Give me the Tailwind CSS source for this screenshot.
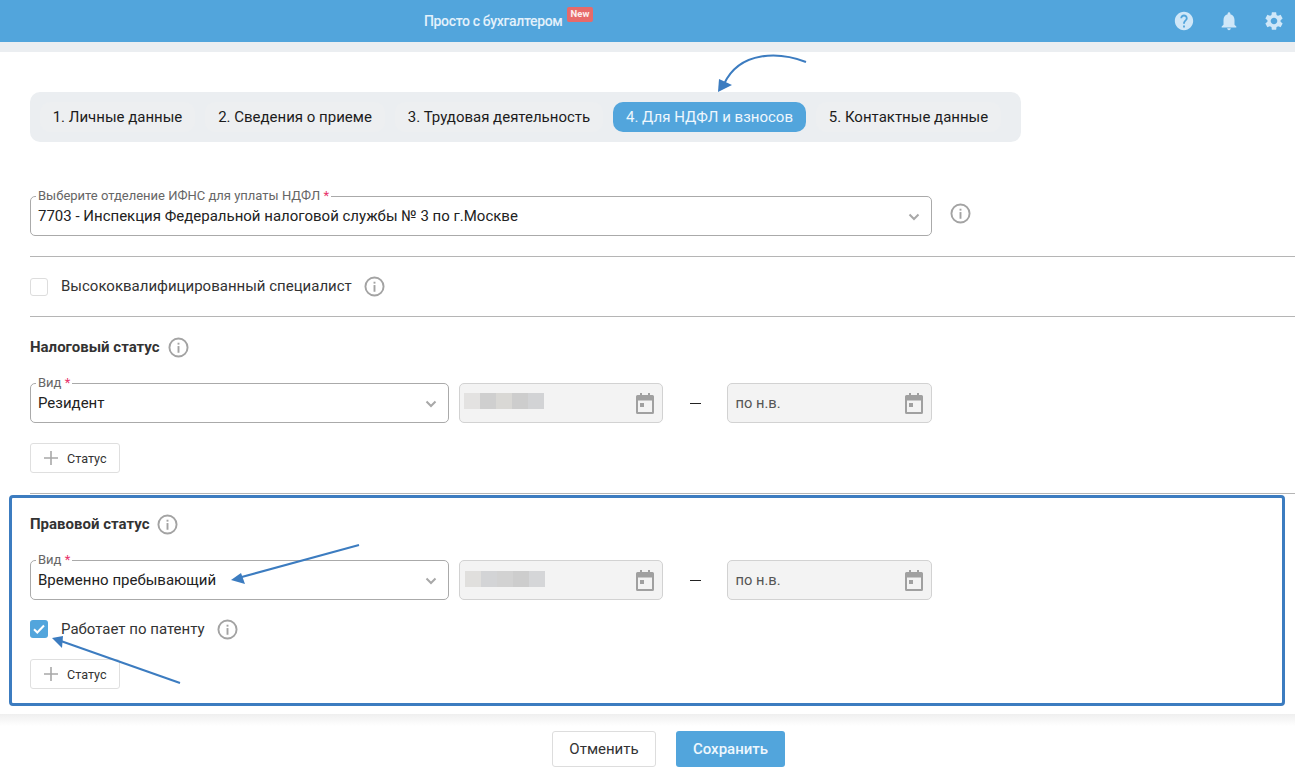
<!DOCTYPE html>
<html lang="ru">
<head>
    <meta charset="UTF-8">
    <title>Для НДФЛ и взносов</title>
    <script src="https://cdn.jsdelivr.net/npm/@tailwindcss/browser@4"></script>
</head>
<body class="bg-white font-['Roboto',sans-serif] text-[#222] overflow-hidden">

<!-- общие иконки -->
<svg class="hidden">
    <symbol id="info" viewBox="0 0 22 22">
        <circle cx="11" cy="11" r="9.5" fill="none" stroke="#a3a3a3" stroke-width="2"/>
        <rect x="10" y="9.5" width="2" height="7" fill="#a3a3a3"/>
        <rect x="10" y="6" width="2" height="2" fill="#a3a3a3"/>
    </symbol>
    <symbol id="chevron" viewBox="0 0 12 8">
        <path d="M1.5 1.5 6 6l4.500-4.500" fill="none" stroke="#a8a8a8" stroke-width="2"/>
    </symbol>
    <symbol id="calendar" viewBox="0 0 18 21">
        <path d="M4 0h2v2h6V0h2v2h2.500A1.500 1.500 0 0 1 18 3.500v16a1.500 1.500 0 0 1-1.500 1.500h-15A1.500 1.500 0 0 1 0 19.500v-16A1.500 1.500 0 0 1 1.500 2H4zM2 7.500V19h14V7.500z" fill="#a0a0a0"/>
        <rect x="4" y="10" width="4" height="4" fill="#a0a0a0"/>
    </symbol>
    <symbol id="plus" viewBox="0 0 14 14">
        <path d="M7 0v14M0 7h14" stroke="#a8a8a8" stroke-width="1.600"/>
    </symbol>
</svg>

<div class="relative h-[775px] flex flex-col">
    <!-- шапка -->
    <header class="h-[42px] shrink-0 bg-[#52a5dc] flex items-center pl-[424px] pr-[10px]">
        <div class="relative text-[14px] font-medium text-[#e3f1fb] tracking-[-0.35px]">Просто с бухгалтером
            <span class="absolute left-[143px] -top-[4px] w-[26px] h-[15px] rounded-[2px] bg-[#e76a6a] text-[9.500px] tracking-normal font-bold text-[#fdeeee] flex items-center justify-center">New</span>
        </div>
        <div class="ml-auto flex items-center gap-[23px]">
            <svg class="w-[22px] h-[22px]" viewBox="0 0 24 24" fill="#cfe7f8"><path d="M12 2C6.480 2 2 6.480 2 12s4.480 10 10 10 10-4.480 10-10S17.520 2 12 2zm1 17h-2v-2h2v2zm2.070-7.750l-.9.920C13.450 12.900 13 13.500 13 15h-2v-.5c0-1.100.45-2.100 1.170-2.830l1.240-1.260c.37-.36.59-.86.59-1.410 0-1.100-.9-2-2-2s-2 .9-2 2H8c0-2.210 1.790-4 4-4s4 1.790 4 4c0 .88-.36 1.680-.93 2.250z"/></svg>
            <svg class="w-[22px] h-[22px]" viewBox="0 0 24 24" fill="#cfe7f8"><path d="M12 22c1.100 0 2-.9 2-2h-4c0 1.100.89 2 2 2zm6-6v-5c0-3.070-1.640-5.640-4.500-6.320V4c0-.83-.67-1.500-1.500-1.500s-1.500.67-1.500 1.500v.68C7.630 5.360 6 7.920 6 11v5l-2 2v1h16v-1l-2-2z"/></svg>
            <svg class="w-[22px] h-[22px]" viewBox="0 0 24 24" fill="#cfe7f8"><path d="M19.140 12.940c.04-.3.06-.61.06-.94 0-.32-.02-.64-.07-.94l2.030-1.580c.18-.14.23-.41.12-.61l-1.920-3.320c-.12-.22-.37-.29-.59-.22l-2.390.96c-.5-.38-1.030-.7-1.620-.94l-.36-2.540c-.04-.24-.24-.41-.48-.41h-3.840c-.24 0-.43.17-.47.41l-.36 2.540c-.59.24-1.130.57-1.620.94l-2.390-.96c-.22-.08-.47 0-.59.22L2.740 8.870c-.12.21-.08.47.12.61l2.030 1.580c-.05.3-.09.63-.09.94s.02.64.07.94l-2.030 1.580c-.18.14-.23.41-.12.61l1.920 3.320c.12.22.37.29.59.22l2.390-.96c.5.38 1.030.7 1.620.94l.36 2.540c.05.24.24.41.48.41h3.840c.24 0 .44-.17.47-.41l.36-2.540c.59-.24 1.130-.56 1.620-.94l2.390.96c.22.08.47 0 .59-.22l1.920-3.320c.12-.22.07-.47-.12-.61l-2.010-1.580zM12 15.600c-1.980 0-3.600-1.620-3.600-3.600s1.620-3.600 3.600-3.600 3.600 1.620 3.600 3.600-1.620 3.600-3.600 3.600z"/></svg>
        </div>
    </header>
    <div class="h-[10px] shrink-0 bg-[#ebeef1]"></div>

    <main class="h-[662px] shrink-0 pl-[30px] pt-[40px]">
        <!-- шаги -->
        <nav class="w-[991px] h-[50px] rounded-[10px] bg-[#ebeef1] flex items-center gap-[10px] px-[10px] text-[15px] text-[#1c1c1c]">
            <div class="w-[155px] h-[30px] pt-px rounded-[10px] bg-[#edeff1] flex items-center justify-center">1. Личные данные</div>
            <div class="w-[180px] h-[30px] pt-px rounded-[10px] bg-[#edeff1] flex items-center justify-center">2. Сведения о приеме</div>
            <div class="w-[208px] h-[30px] pt-px rounded-[10px] bg-[#edeff1] flex items-center justify-center">3. Трудовая деятельность</div>
            <div class="w-[193px] h-[30px] pt-px rounded-[10px] bg-[#52a5dc] text-[#eef7fd] flex items-center justify-center">4. Для НДФЛ и взносов</div>
            <div class="w-[185px] h-[30px] pt-px rounded-[10px] bg-[#edeff1] flex items-center justify-center">5. Контактные данные</div>
        </nav>

        <!-- ИФНС -->
        <div class="mt-[54px] flex items-center">
            <div class="relative w-[902px] h-[40px] rounded-[5px] border border-[#aaaaaa] flex items-center pl-[7px] pr-[11px] pt-[1px] text-[15px]">
                <span class="absolute left-[5px] -top-[8px] bg-white px-[2px] text-[13px] leading-[14px] text-[#666]">Выберите отделение ИФНС для уплаты НДФЛ <span class="text-[#e8336b]">*</span></span>
                7703 - Инспекция Федеральной налоговой службы № 3 по г.Москве
                <svg class="ml-auto w-[12px] h-[8px]"><use href="#chevron"/></svg>
            </div>
            <svg class="ml-[18px] -mt-[6px] w-[21px] h-[21px]"><use href="#info"/></svg>
        </div>
        <div class="mt-[20px] h-px bg-[#b5b5b5]"></div>

        <div class="h-[59px] flex items-center">
            <span class="w-[18px] h-[18px] rounded-[3px] border border-[#dddddd] bg-white"></span>
            <span class="ml-[13px] text-[15px] text-[#333]">Высококвалифицированный специалист</span>
            <svg class="ml-[12px] w-[21px] h-[21px]"><use href="#info"/></svg>
        </div>
        <div class="h-px bg-[#b5b5b5]"></div>

        <!-- Налоговый статус -->
        <div class="mt-[20px] h-[20px] flex items-center">
            <span class="text-[15px] font-bold text-[#333]">Налоговый статус</span>
            <svg class="ml-[8px] w-[21px] h-[21px]"><use href="#info"/></svg>
        </div>
        <div class="mt-[26px] flex items-center">
            <div class="relative w-[419px] h-[40px] rounded-[5px] border border-[#aaaaaa] flex items-center pl-[7px] pr-[11px] pt-[1px] text-[15px]">
                <span class="absolute left-[5px] -top-[8px] bg-white px-[2px] text-[13px] leading-[14px] text-[#666]">Вид <span class="text-[#e8336b]">*</span></span>
                Резидент
                <svg class="ml-auto w-[12px] h-[8px]"><use href="#chevron"/></svg>
            </div>
            <div class="ml-[10px] w-[204px] h-[40px] rounded-[5px] border border-[#d2d2d2] bg-[#f3f3f3] flex items-center pl-[4px] pr-[8px]">
                <div class="flex -mt-[4px]">
                    <i class="w-[16px] h-[16px] bg-[#e3e2e1]"></i><i class="w-[16px] h-[16px] bg-[#cfcfcf]"></i><i class="w-[16px] h-[16px] bg-[#d9d8d5]"></i><i class="w-[16px] h-[16px] bg-[#cdcdcd]"></i><i class="w-[16px] h-[16px] bg-[#d2d3d5]"></i>
                </div>
                <svg class="ml-auto w-[18px] h-[21px]"><use href="#calendar"/></svg>
            </div>
            <span class="ml-[27px] w-[11px] h-px bg-[#222]"></span>
            <div class="ml-[26px] w-[205px] h-[40px] rounded-[5px] border border-[#d2d2d2] bg-[#f3f3f3] flex items-center pl-[7.500px] pr-[8px] text-[14.700px] text-[#555]">
                по н.в.
                <svg class="ml-auto w-[18px] h-[21px]"><use href="#calendar"/></svg>
            </div>
        </div>
        <button class="mt-[20px] w-[90px] h-[30px] rounded-[3px] border border-[#dfdfdf] bg-white flex items-center pl-[13px] text-[12.600px] text-[#333]">
            <svg class="w-[14px] h-[14px] mr-[9px]"><use href="#plus"/></svg><span class="translate-y-px">Статус</span>
        </button>
        <div class="mt-[20px] h-px bg-[#b5b5b5]"></div>

        <!-- Правовой статус -->
        <div class="mt-[20px] h-[20px] flex items-center">
            <span class="text-[15px] font-bold text-[#333]">Правовой статус</span>
            <svg class="ml-[8px] w-[21px] h-[21px]"><use href="#info"/></svg>
        </div>
        <div class="mt-[26px] flex items-center">
            <div class="relative w-[419px] h-[40px] rounded-[5px] border border-[#aaaaaa] flex items-center pl-[7px] pr-[11px] pt-[1px] text-[15px]">
                <span class="absolute left-[5px] -top-[8px] bg-white px-[2px] text-[13px] leading-[14px] text-[#666]">Вид <span class="text-[#e8336b]">*</span></span>
                Временно пребывающий
                <svg class="ml-auto w-[12px] h-[8px]"><use href="#chevron"/></svg>
            </div>
            <div class="ml-[10px] w-[204px] h-[40px] rounded-[5px] border border-[#d2d2d2] bg-[#f3f3f3] flex items-center pl-[5px] pr-[8px]">
                <div class="flex -mt-[3px]">
                    <i class="w-[16px] h-[16px] bg-[#e0dfdd]"></i><i class="w-[16px] h-[16px] bg-[#d3d4d6]"></i><i class="w-[16px] h-[16px] bg-[#d2d2d2]"></i><i class="w-[16px] h-[16px] bg-[#cdcdcd]"></i><i class="w-[16px] h-[16px] bg-[#d5d6d8]"></i>
                </div>
                <svg class="ml-auto w-[18px] h-[21px]"><use href="#calendar"/></svg>
            </div>
            <span class="ml-[27px] w-[11px] h-px bg-[#222]"></span>
            <div class="ml-[26px] w-[205px] h-[40px] rounded-[5px] border border-[#d2d2d2] bg-[#f3f3f3] flex items-center pl-[7.500px] pr-[8px] text-[14.700px] text-[#555]">
                по н.в.
                <svg class="ml-auto w-[18px] h-[21px]"><use href="#calendar"/></svg>
            </div>
        </div>
        <div class="mt-[20px] h-[18px] flex items-center">
            <span class="w-[18px] h-[18px] rounded-[3px] bg-[#52a5dc] flex items-center justify-center">
                <svg class="w-[12px] h-[10px]" viewBox="0 0 12 10"><path d="M1 5.200 4.300 8.500 11 1.500" fill="none" stroke="#fff" stroke-width="2"/></svg>
            </span>
            <span class="ml-[13px] text-[15px] text-[#333]">Работает по патенту</span>
            <svg class="ml-[12px] w-[21px] h-[21px]"><use href="#info"/></svg>
        </div>
        <button class="mt-[21px] w-[90px] h-[30px] rounded-[3px] border border-[#dfdfdf] bg-white flex items-center pl-[13px] text-[12.600px] text-[#333]">
            <svg class="w-[14px] h-[14px] mr-[9px]"><use href="#plus"/></svg><span class="translate-y-px">Статус</span>
        </button>
    </main>

    <!-- низ формы -->
    <footer class="flex-1 bg-linear-to-b from-[#efefef] to-white to-[12px] pl-[552px] pt-[17px] flex gap-[20px]">
        <button class="w-[104px] h-[36px] rounded-[3px] border border-[#dddddd] bg-white text-[15px] text-[#333]">Отменить</button>
        <button class="w-[109px] h-[36px] rounded-[3px] bg-[#52a5dc] text-[15px] font-medium text-[#eef7fd]">Сохранить</button>
    </footer>

    <!-- пометки поверх скриншота -->
    <div class="absolute left-[9px] top-[495px] w-[1276px] h-[211px] rounded-[4px] border-[3px] border-[#3c7cc0]"></div>
    <svg class="absolute left-0 top-0 pointer-events-none" width="1295" height="775" fill="#3c7cc0">
        <path d="M806 62C780 52 740 50 724 84" fill="none" stroke="#3c7cc0" stroke-width="2"/>
        <path d="M718 92 719 79 732 85z"/>
        <path d="M359 545 238 578" fill="none" stroke="#3c7cc0" stroke-width="2"/>
        <path d="M231 580 241 573 245 584z"/>
        <path d="M180 683 58 640" fill="none" stroke="#3c7cc0" stroke-width="2"/>
        <path d="M52 638 63 636 62 648z"/>
    </svg>
</div>
</body>
</html>
